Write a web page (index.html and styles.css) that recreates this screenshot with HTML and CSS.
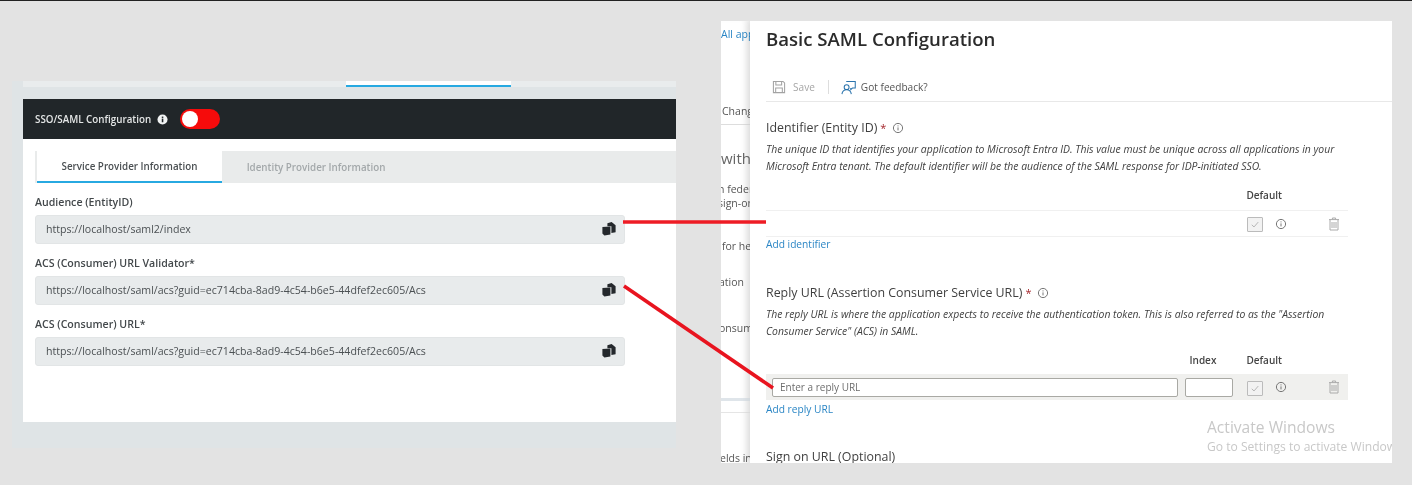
FILE: index.html
```html
<!DOCTYPE html>
<html lang="en">
<head>
<meta charset="utf-8">
<title>SAML configuration</title>
<link rel="stylesheet" href="styles.css">
</head>
<body>
<div class="screen">
  <section class="sso">
    <div class="sso-top"><span class="sso-top-tab"></span></div>
    <div class="sso-card">
      <header class="sso-head">
        <span class="sso-title">SSO/SAML Configuration</span>
        <svg class="sso-info" viewBox="0 0 12 12"><circle cx="6" cy="6" r="5.5" fill="#f2f4f4"/><rect x="5.2" y="5" width="1.7" height="4" fill="#212629"/><rect x="5.2" y="2.8" width="1.7" height="1.5" fill="#212629"/></svg>
        <span class="toggle"><span class="knob"></span></span>
      </header>
      <div class="sso-body">
        <div class="tabs">
          <span class="tab tab-on">Service Provider Information</span>
          <span class="tab tab-off">Identity Provider Information</span>
        </div>
        <label class="f-label f-first">Audience (EntityID)</label>
        <div class="f-input"><span>https://localhost/saml2/index</span>
          <svg class="copy" viewBox="0 0 14 14"><path d="M5.4 1.2 9.6 0 13.6 3.2V10.2L9.4 11V4.2H5.4z" fill="#24282c"/><path d="M.4 5 8.4 4.6V12.6L2.4 13.6.4 11.4z" fill="#24282c"/></svg>
        </div>
        <label class="f-label">ACS (Consumer) URL Validator*</label>
        <div class="f-input"><span>https://localhost/saml/acs?guid=ec714cba-8ad9-4c54-b6e5-44dfef2ec605/Acs</span>
          <svg class="copy" viewBox="0 0 14 14"><path d="M5.4 1.2 9.6 0 13.6 3.2V10.2L9.4 11V4.2H5.4z" fill="#24282c"/><path d="M.4 5 8.4 4.6V12.6L2.4 13.6.4 11.4z" fill="#24282c"/></svg>
        </div>
        <label class="f-label">ACS (Consumer) URL*</label>
        <div class="f-input"><span>https://localhost/saml/acs?guid=ec714cba-8ad9-4c54-b6e5-44dfef2ec605/Acs</span>
          <svg class="copy" viewBox="0 0 14 14"><path d="M5.4 1.2 9.6 0 13.6 3.2V10.2L9.4 11V4.2H5.4z" fill="#24282c"/><path d="M.4 5 8.4 4.6V12.6L2.4 13.6.4 11.4z" fill="#24282c"/></svg>
        </div>
      </div>
    </div>
  </section>

  <section class="azure">
    <aside class="back">
      <span class="b b-all">All applications</span>
      <span class="b b-chg">Change</span>
      <span class="b b-rule"></span>
      <span class="b b-with">with</span>
      <span class="b b-fed">n federation</span>
      <span class="b b-sign">sign-on</span>
      <span class="b b-for">for help</span>
      <span class="b b-ati">ation</span>
      <span class="b b-con">onsumer</span>
      <span class="b b-rule2"></span>
      <span class="b b-rule3"></span>
      <span class="b b-lds">elds in</span>
    </aside>
    <main class="blade">
      <h1 class="blade-title">Basic SAML Configuration</h1>
      <div class="toolbar">
        <span class="tool tool-off">
          <svg class="ico-save" viewBox="0 0 16 16" fill="none" stroke="#a3a3a3" stroke-width="1.2"><path d="M1.6 1.6h11l1.8 1.8v11H1.6z"/><path d="M4.4 1.8v4h6.6v-4M4.2 14.2V9.2h7.6v5"/></svg>
          Save
        </span>
        <span class="tool-sep"></span>
        <span class="tool">
          <svg class="ico-fb" viewBox="0 0 16 16" fill="none" stroke="#2b74ad" stroke-width="1.1"><circle cx="6" cy="7.6" r="2.6"/><path d="M1 15c.4-3 2.4-4.6 5-4.6s4.6 1.6 5 4.6"/><path d="M5.6 1.6h9.6v7h-3l-1.8 1.6V8.6"/></svg>
          Got feedback?
        </span>
      </div>

      <div class="group g-id">
        <h2 class="g-title">Identifier (Entity ID) <b class="req">*</b>
          <svg class="ico-i" viewBox="0 0 12 12" fill="none" stroke="#777" stroke-width="1"><circle cx="6" cy="6" r="4.6"/><path d="M6 5.4v3M6 3.4v1"/></svg>
        </h2>
        <p class="g-desc">The unique ID that identifies your application to Microsoft Entra ID. This value must be unique across all applications in your<br>Microsoft Entra tenant. The default identifier will be the audience of the SAML response for IDP-initiated SSO.</p>
        <div class="cols"><span class="col-def">Default</span></div>
        <div class="row row-id">
          <span class="check"><svg viewBox="0 0 16 16" fill="none" stroke="#a8a8a8" stroke-width="1"><path d="M4 8.4 6.8 11l5.2-6"/></svg></span>
          <svg class="ico-i row-i" viewBox="0 0 12 12" fill="none" stroke="#777" stroke-width="1"><circle cx="6" cy="6" r="4.6"/><path d="M6 5.4v3M6 3.4v1"/></svg>
          <svg class="ico-bin" viewBox="0 0 12 14" fill="none" stroke="#aaa" stroke-width="1"><path d="M1 2.6h10M4.4 2.4V1h3.2v1.4M2 2.8V13h8V2.8"/><path d="M4 5v6M6 5v6M8 5v6"/></svg>
        </div>
        <a class="add">Add identifier</a>
      </div>

      <div class="group g-reply">
        <h2 class="g-title">Reply URL (Assertion Consumer Service URL) <b class="req">*</b>
          <svg class="ico-i" viewBox="0 0 12 12" fill="none" stroke="#777" stroke-width="1"><circle cx="6" cy="6" r="4.6"/><path d="M6 5.4v3M6 3.4v1"/></svg>
        </h2>
        <p class="g-desc">The reply URL is where the application expects to receive the authentication token. This is also referred to as the "Assertion<br>Consumer Service" (ACS) in SAML.</p>
        <div class="cols"><span class="col-idx">Index</span><span class="col-def">Default</span></div>
        <div class="row row-reply">
          <span class="inp inp-url">Enter a reply URL</span>
          <span class="inp inp-idx"></span>
          <span class="check"><svg viewBox="0 0 16 16" fill="none" stroke="#a8a8a8" stroke-width="1"><path d="M4 8.4 6.8 11l5.2-6"/></svg></span>
          <svg class="ico-i row-i" viewBox="0 0 12 12" fill="none" stroke="#777" stroke-width="1"><circle cx="6" cy="6" r="4.6"/><path d="M6 5.4v3M6 3.4v1"/></svg>
          <svg class="ico-bin" viewBox="0 0 12 14" fill="none" stroke="#aaa" stroke-width="1"><path d="M1 2.6h10M4.4 2.4V1h3.2v1.4M2 2.8V13h8V2.8"/><path d="M4 5v6M6 5v6M8 5v6"/></svg>
        </div>
        <a class="add add-reply">Add reply URL</a>
      </div>

      <h2 class="g-title g-sign">Sign on URL (Optional)</h2>
      <div class="activate">
        <div class="act-1">Activate Windows</div>
        <div class="act-2">Go to Settings to activate Windows.</div>
      </div>
    </main>
  </section>

  <svg class="arrows" viewBox="0 0 1412 485">
    <path d="M623 222H766" stroke="#ee1c25" stroke-width="3.4" fill="none"/>
    <path d="M624 286 773 388" stroke="#e8141f" stroke-width="3.6" fill="none"/>
  </svg>
</div>
</body>
</html>
```

FILE: styles.css
```css
* { box-sizing: border-box; }
html, body { margin: 0; height: 100%; background: #e3e3e3; overflow: hidden; }
.screen {
  position: relative;
  width: 1412px;
  height: 485px;
  background: #e3e3e3;
  border-top: 1px solid #222;
  display: flex;
  align-items: flex-start;
  filter: blur(0.35px);
  font-family: "Open Sans", "Noto Sans", sans-serif;
}

/* left: SSO panel */
.sso {
  width: 664px;
  height: 367px;
  margin: 80px 0 0 12px;
  background: #dfe4e6;
  display: flex;
  flex-direction: column;
}
.sso-top { height: 6px; margin-left: 11px; background: #e9eced; padding-left: 323px; }
.sso-top-tab {
  display: block; width: 165px; height: 6px;
  background: #fff; border-bottom: 2.5px solid #27a9e1;
}
.sso-card {
  margin: 12px 0 26px 11px;
  height: 323px;
  background: #fff;
  display: flex;
  flex-direction: column;
}
.sso-head {
  height: 40px;
  flex: none;
  background: #212629;
  display: flex;
  align-items: center;
  padding-left: 12px;
}
.sso-title { color: #e4e6e6; font-size: 9.8px; font-weight: 600; }
.sso-info { width: 11px; height: 11px; margin-left: 6px; }
.toggle {
  width: 40px; height: 20px; margin-left: 12px;
  background: #f60b0b; border-radius: 10px;
  padding: 2px 0 0 2px;
}
.knob { display: block; width: 16px; height: 16px; border-radius: 50%; background: #fff; }
.sso-body { padding: 12px 0 0 12px; }
.tabs {
  height: 32px;
  background: #e9ebeb;
  display: flex;
  padding-left: 2px;
  margin-bottom: 12px;
}
.tab {
  width: 185px;
  height: 32px;
  display: flex; align-items: center; justify-content: center;
  color: #a3a8aa;
  font-size: 9.8px;
  font-weight: 600;
}
.tab-off { padding-left: 3px; }
.tab-on {
  background: #fff; color: #4a4f52;
  border-bottom: 2.5px solid #27a9e1;
  padding-top: 1px;
}
.f-label {
  display: block;
  color: #43484b;
  font-size: 10.6px;
  font-weight: 600;
  line-height: 14px;
  margin: 12px 0 6px;
}
.f-first { margin-top: 0; }
.f-input {
  width: 590px;
  height: 29px;
  background: #e8ebec;
  border: 1px solid #e2e5e6;
  border-radius: 3px;
  display: flex;
  align-items: center;
  justify-content: space-between;
  padding: 0 8px 2px 10px;
  color: #4b5053;
  font-size: 10.6px;
}
.copy { width: 14px; height: 14px; }

/* right: Azure blade */
.azure {
  width: 671px;
  height: 442px;
  margin: 20px 0 0 45px;
  background: #fff;
  display: flex;
  overflow: hidden;
  position: relative;
}
.back {
  width: 29px;
  flex: none;
  overflow: hidden;
  display: flex;
  flex-direction: column;
  align-items: flex-start;
  color: #555;
  font-size: 10.5px;
  white-space: nowrap;
  box-shadow: inset -8px 0 8px -6px #e6e6e6;
}
.b { display: block; line-height: 14px; flex: none; }
.b-all { color: #2b86c5; margin-top: 6px; }
.b-chg { margin: 63px 0 0 1px; }
.b-rule { width: 29px; border-top: 1px solid #ddd; margin-top: 6px; }
.b-with { font-size: 15px; line-height: 20px; color: #666; margin: 23px 0 0 0; }
.b-fed { margin: 14px 0 0 -3px; }
.b-sign { margin-left: -3px; }
.b-for { margin: 29px 0 0 1px; }
.b-ati { margin: 22px 0 0 -2px; }
.b-con { margin: 32px 0 0 -2px; }
.b-rule2 { width: 29px; height: 3px; background: #dfe5ea; margin-top: 63px; }
.b-rule3 { width: 29px; border-top: 1px solid #e5e5e5; margin-top: 11px; }
.b-lds { margin-top: 38px; margin-left: -1px; }

.blade {
  flex: 1;
  padding-left: 16px;
  position: relative;
  box-shadow: -4px 0 6px rgba(0,0,0,.06);
  color: #444;
}
.blade-title {
  margin: 5px 0 0;
  font-size: 18.6px;
  line-height: 26px;
  font-weight: 600;
  color: #2b2b2b;
}
.toolbar {
  margin-top: 21px;
  height: 29px;
  padding-left: 6px;
  border-bottom: 1px solid #e8e8e8;
  display: flex;
  align-items: center;
  font-size: 10.1px;
  color: #555;
}
.tool { display: flex; align-items: center; gap: 5px; }
.tool-off { color: #a6a6a6; gap: 7px; }
.ico-save { width: 14px; height: 14px; }
.ico-fb { width: 15px; height: 15px; }
.tool-sep { width: 1px; height: 14px; background: #ddd; margin: 0 12px 0 13px; }
.group { width: 582px; }
.g-title {
  margin: 0;
  font-size: 12.4px;
  line-height: 18px;
  font-weight: 400;
  color: #3f3f3f;
  display: flex;
  align-items: center;
  gap: 3px;
}
.g-id { margin-top: 17px; }
.g-reply { margin-top: 33px; }
.req { color: #a4262c; font-weight: 400; font-size: 11px; }
.ico-i { width: 12px; height: 12px; margin-left: 3px; }
.g-desc {
  margin: 4px 0 0;
  font-size: 10.4px;
  line-height: 17px;
  font-style: italic;
  color: #3f3f3f;
  white-space: nowrap;
}
.cols {
  height: 16px;
  margin-top: 12px;
  display: flex;
  justify-content: flex-end;
  font-size: 10px;
  font-weight: 600;
  color: #444;
  padding-right: 66px;
  line-height: 16px;
}
.col-idx { margin-right: 30px; }
.row {
  display: flex;
  align-items: center;
  justify-content: flex-end;
  padding-right: 8px;
}
.row-id { height: 27px; margin-top: 7px; border-top: 1px solid #f0f0f0; border-bottom: 1px solid #f0f0f0; }
.row-reply { background: #f0f0ee; height: 26px; margin-top: 6px; }
.check {
  width: 16px; height: 15px;
  margin-top: 2px;
  border: 1px solid #bbb; border-radius: 1px;
  background: #f2f2f2;
  display: block;
}
.check svg { display: block; width: 14px; height: 13px; }
.row-i { width: 12px; height: 12px; margin: 0 0 0 12px; }
.ico-bin { width: 12px; height: 14px; margin-left: 41px; }
.inp {
  display: flex; align-items: center;
  height: 19px;
  background: #fff;
  border: 1px solid #a9a9a4;
  border-radius: 2px;
  font-size: 10px;
  color: #6d6d6d;
  padding-left: 7px;
}
.inp-url { width: 406px; margin-right: 7px; }
.inp-idx { width: 48px; margin-right: 14px; }
.add { display: block; color: #2b86c5; font-size: 10.2px; line-height: 14px; }
.add-reply { margin-top: 2px; }
.g-sign { margin-top: 32px; }
.activate {
  position: absolute;
  left: 457px;
  top: 397px;
  white-space: nowrap;
  color: #c8c8c8;
}
.act-1 { font-size: 15.6px; line-height: 19px; }
.act-2 { font-size: 12.1px; line-height: 19px; }

.arrows {
  position: absolute;
  left: 0;
  top: -1px;
  width: 1412px;
  height: 485px;
  pointer-events: none;
}
```
